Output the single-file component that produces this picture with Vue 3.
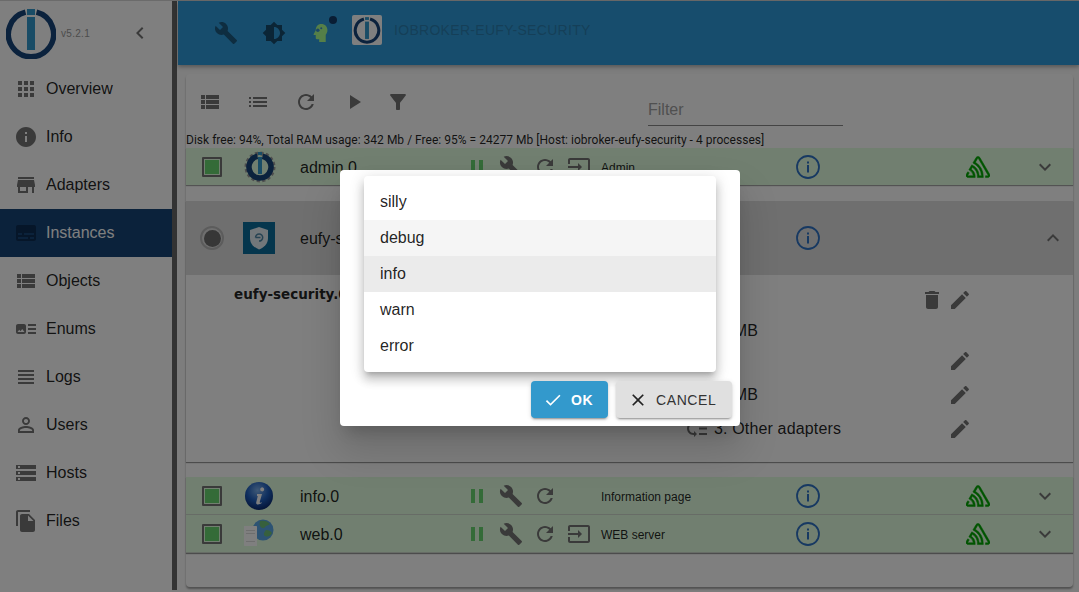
<script setup>
import { ref } from 'vue';

const icons = {
    apps: 'M4 8h4V4H4v4zm6 12h4v-4h-4v4zm-6 0h4v-4H4v4zm0-6h4v-4H4v4zm6 0h4v-4h-4v4zm6-10v4h4V4h-4zm-6 4h4V4h-4v4zm6 6h4v-4h-4v4zm0 6h4v-4h-4v4z',
    info: 'M12 2C6.48 2 2 6.48 2 12s4.48 10 10 10 10-4.48 10-10S17.52 2 12 2zm1 15h-2v-6h2v6zm0-8h-2V7h2v2z',
    store: 'M20 4H4v2h16V4zm1 10v-2l-1-5H4l-1 5v2h1v6h10v-6h4v6h2v-6h1zm-9 4H6v-4h6v4z',
    subtitles: 'M20 4H4c-1.1 0-2 .9-2 2v12c0 1.1.9 2 2 2h16c1.1 0 2-.9 2-2V6c0-1.1-.9-2-2-2zM4 12h4v2H4v-2zm10 6H4v-2h10v2zm6 0h-4v-2h4v2zm0-4H10v-2h10v2z',
    viewList: 'M3 14h4v-4H3v4zm0 5h4v-4H3v4zM3 9h4V5H3v4zm5 5h13v-4H8v4zm0 5h13v-4H8v4zM8 5v4h13V5H8z',
    artTrack: 'M22 13h-8v-2h8v2zm0-6h-8v2h8V7zm-8 10h8v-2h-8v2zm-2-8v6c0 1.1-.9 2-2 2H4c-1.1 0-2-.9-2-2V9c0-1.1.9-2 2-2h6c1.1 0 2 .9 2 2zm-1.5 6l-2.25-3-1.75 2.26-1.25-1.51L3.5 15h7z',
    headline: 'M4 15h16v-2H4v2zm0 4h16v-2H4v2zm0-8h16V9H4v2zm0-6v2h16V5H4z',
    person: 'M12 5.9c1.16 0 2.1.94 2.1 2.1s-.94 2.1-2.1 2.1S9.9 9.16 9.9 8s.94-2.1 2.1-2.1m0 9c2.97 0 6.1 1.46 6.1 2.1v1.1H5.9V17c0-.64 3.13-2.1 6.1-2.1M12 4C9.79 4 8 5.79 8 8s1.79 4 4 4 4-1.79 4-4-1.79-4-4-4zm0 9c-2.67 0-8 1.34-8 4v3h16v-3c0-2.66-5.33-4-8-4z',
    storage: 'M2 20h20v-4H2v4zm2-3h2v2H4v-2zM2 4v4h20V4H2zm4 3H4V5h2v2zm-4 7h20v-4H2v4zm2-3h2v2H4v-2z',
    files: 'M16 1H4c-1.1 0-2 .9-2 2v14h2V3h12V1zm-1 4l6 6v10c0 1.1-.9 2-2 2H7.99C6.89 23 6 22.1 6 21l.01-14c0-1.1.89-2 1.99-2h7zm-1 7h5.5L14 6.5V12z',
    build: 'M22.7 19l-9.1-9.1c.9-2.3.4-5-1.5-6.9-2-2-5-2.4-7.4-1.3L9 6 6 9 1.6 4.7C.4 7.1.9 10.1 2.9 12.1c1.9 1.9 4.6 2.4 6.9 1.5l9.1 9.1c.4.4 1 .4 1.4 0l2.3-2.3c.5-.4.5-1.1.1-1.4z',
    brightness: 'M20 15.31L23.31 12 20 8.69V4h-4.69L12 .69 8.69 4H4v4.69L.69 12 4 15.31V20h4.69L12 23.31 15.31 20H20v-4.69zM12 18V6c3.31 0 6 2.69 6 6s-2.69 6-6 6z',
    refresh: 'M17.65 6.35C16.2 4.9 14.21 4 12 4c-4.42 0-7.99 3.58-7.99 8s3.57 8 7.99 8c3.73 0 6.84-2.55 7.73-6h-2.08c-.82 2.33-3.04 4-5.65 4-3.31 0-6-2.69-6-6s2.69-6 6-6c1.66 0 3.14.69 4.22 1.78L13 11h7V4l-2.35 2.35z',
    play: 'M8 5v14l11-7z',
    filter: 'M4.25 5.61C6.27 8.2 10 13 10 13v6c0 .55.45 1 1 1h2c.55 0 1-.45 1-1v-6s3.72-4.8 5.74-7.39c.51-.66.04-1.61-.79-1.61H5.04c-.83 0-1.3.95-.79 1.61z',
    list: 'M3 13h2v-2H3v2zm0 4h2v-2H3v2zm0-8h2V7H3v2zm4 4h14v-2H7v2zm0 4h14v-2H7v2zM7 7v2h14V7H7z',
    input: 'M21 3.01H3c-1.1 0-2 .9-2 2V9h2V4.99h18v14.03H3V15H1v4.01c0 1.1.9 1.98 2 1.98h18c1.1 0 2-.88 2-1.98v-14c0-1.11-.9-2-2-2zM11 16l4-4-4-4v3H1v2h10v3z',
    pause: 'M6 19h4V5H6v14zm8-14v14h4V5h-4z',
    trash: 'M6 19c0 1.1.9 2 2 2h8c1.1 0 2-.9 2-2V7H6v12zM19 4h-3.5l-1-1h-5l-1 1H5v2h14V4z',
    edit: 'M3 17.25V21h3.75L17.81 9.94l-3.75-3.75L3 17.25zM20.71 7.04c.39-.39.39-1.02 0-1.41l-2.34-2.34c-.39-.39-1.02-.39-1.41 0l-1.83 1.83 3.75 3.75 1.83-1.83z',
    check: 'M9 16.17L4.83 12l-1.42 1.41L9 19 21 7l-1.41-1.41z',
    close: 'M19 6.41L17.59 5 12 10.59 6.41 5 5 6.41 10.59 12 5 17.59 6.41 19 12 13.41 17.59 19 19 17.59 13.41 12z',
    more: 'M16.59 8.59L12 13.17 7.41 8.59 6 10l6 6 6-6z',
    less: 'M12 8l-6 6 1.41 1.41L12 10.83l4.59 4.58L18 14z',
    back: 'M15.41 7.41L14 6l-6 6 6 6 1.41-1.41L10.83 12z',
    priority: 'M14 5h8v2h-8zm0 5.5h8v2h-8zm0 5.5h8v2h-8zM2 11.5C2 15.08 4.92 18 8.5 18H9v2l3-3-3-3v2h-.5C6.02 16 4 13.98 4 11.5S6.02 7 8.5 7H12V5H8.5C4.92 5 2 7.92 2 11.5z',
    sentry: 'M13.91 2.505c-.873-1.448-2.972-1.448-3.844 0L6.904 7.92a15.478 15.478 0 0 1 8.53 12.811h-2.221A13.301 13.301 0 0 0 5.784 9.814l-2.926 5.06a7.65 7.65 0 0 1 4.435 5.848H2.194a.365.365 0 0 1-.298-.534l1.413-2.402a5.16 5.16 0 0 0-1.614-.913L.296 19.275a2.182 2.182 0 0 0 .812 2.999 2.24 2.24 0 0 0 1.086.288h6.983a9.322 9.322 0 0 0-3.845-8.318l1.11-1.922a11.47 11.47 0 0 1 4.95 10.24h5.915a17.242 17.242 0 0 0-7.885-15.28l2.244-3.845a.37.37 0 0 1 .504-.13c.255.14 9.75 16.708 9.928 16.9a.365.365 0 0 1-.327.543h-2.287c.029.612.029 1.223 0 1.831h2.297a2.206 2.206 0 0 0 1.922-3.31z',
};

const nav = [
    { name: 'Overview', icon: 'apps' },
    { name: 'Info', icon: 'info' },
    { name: 'Adapters', icon: 'store' },
    { name: 'Instances', icon: 'subtitles', active: true },
    { name: 'Objects', icon: 'viewList' },
    { name: 'Enums', icon: 'artTrack' },
    { name: 'Logs', icon: 'headline' },
    { name: 'Users', icon: 'person' },
    { name: 'Hosts', icon: 'storage' },
    { name: 'Files', icon: 'files' },
];

const details = [
    { text: 'info', trash: true, edit: true },
    { text: '23 MB' },
    { text: 'on', edit: true },
    { text: '23 MB', edit: true },
    { text: '3. Other adapters', icon: 'priority', edit: true },
];

const levels = ['silly', 'debug', 'info', 'warn', 'error'];
const level = ref('info');
const hovered = ref('debug');
</script>

<template>
    <div class="page">
        <div class="topline"></div>
        <div class="shell">
            <aside class="drawer">
                <div class="brand">
                    <svg class="logo" viewBox="0 0 50 50">
                        <path class="logo-ring" d="M19.5 3.2A22.6 22.6 0 1 0 30.5 3.2" />
                        <rect class="logo-bar" x="21" y="0" width="8" height="6" />
                        <rect class="logo-bar" x="21" y="8" width="8" height="33" />
                    </svg>
                    <span class="version">v5.2.1</span>
                    <svg class="icon back" viewBox="0 0 24 24"><path :d="icons.back" /></svg>
                </div>
                <nav>
                    <a v-for="item in nav" :key="item.name" class="nav-item" :class="{ active: item.active }">
                        <svg class="icon" viewBox="0 0 24 24"><path :d="icons[item.icon]" /></svg>
                        <span>{{ item.name }}</span>
                    </a>
                </nav>
            </aside>
            <div class="drawer-bar"></div>

            <div class="main">
                <header class="appbar">
                    <svg class="icon bar-icon" viewBox="0 0 24 24"><path :d="icons.build" /></svg>
                    <svg class="icon bar-icon" viewBox="0 0 24 24"><path fill-rule="evenodd" :d="icons.brightness" /></svg>
                    <span class="expert">
                        <svg class="head" viewBox="0 0 24 32">
                            <path class="head-fill" d="M12 3c5.5 0 9 4 9 9 0 3-1.5 5-2.5 6.5V29H9v-4H5.6c-1.2 0-1.6-.8-1.6-2v-4H1.5c-.7 0-.9-.6-.6-1.200L4 12c0-5 3-9 8-9z" />
                            <circle class="head-mark" cx="7" cy="12" r="2.600" />
                            <circle class="head-mark" cx="12" cy="9" r="1.500" />
                        </svg>
                        <span class="dot"></span>
                    </span>
                    <span class="adapter-logo">
                        <svg viewBox="0 0 50 50">
                            <path class="logo-ring" d="M19.5 5.500A21 21 0 1 0 30.500 5.500" stroke-width="5" />
                            <rect class="logo-bar" x="21.500" y="2" width="7" height="5" />
                            <rect class="logo-bar" x="21.500" y="10" width="7" height="31" />
                        </svg>
                    </span>
                    <span class="bar-title">IOBROKER-EUFY-SECURITY</span>
                </header>

                <section class="paper">
                    <div class="toolbar">
                        <div class="tools">
                            <svg class="icon" viewBox="0 0 24 24"><path :d="icons.viewList" /></svg>
                            <svg class="icon" viewBox="0 0 24 24"><path :d="icons.list" /></svg>
                            <svg class="icon" viewBox="0 0 24 24"><path :d="icons.refresh" /></svg>
                            <svg class="icon" viewBox="0 0 24 24"><path :d="icons.play" /></svg>
                            <svg class="icon funnel" viewBox="0 0 24 24"><path :d="icons.filter" /></svg>
                        </div>
                        <div class="filter">Filter</div>
                    </div>
                    <div class="status">Disk free: 94%, Total RAM usage: 342 Mb / Free: 95% = 24277 Mb [Host: iobroker-eufy-security - 4 processes]</div>

                    <div class="row green single">
                        <span class="check"><i></i></span>
                        <svg class="adapter gear" viewBox="0 0 32 32">
                            <circle class="gear-ring" cx="16" cy="16" r="13.500" />
                            <path class="logo-ring" d="M13.500 5.300A11 11 0 1 0 18.500 5.300" stroke-width="3" />
                            <rect class="logo-bar" x="14" y="1" width="4" height="3" />
                            <rect class="logo-bar" x="14" y="6" width="4" height="17" />
                        </svg>
                        <span class="name">admin.0</span>
                        <span class="actions">
                            <svg class="icon pause" viewBox="0 0 24 24"><path :d="icons.pause" /></svg>
                            <svg class="icon" viewBox="0 0 24 24"><path :d="icons.build" /></svg>
                            <svg class="icon" viewBox="0 0 24 24"><path :d="icons.refresh" /></svg>
                            <svg class="icon" viewBox="0 0 24 24"><path :d="icons.input" /></svg>
                        </span>
                        <span class="desc">Admin</span>
                        <svg class="info-ring" viewBox="0 0 24 24"><circle cx="12" cy="12" r="11" /><path d="M11 6.500h2v2h-2zm0 3.500h2v7.500h-2z" /></svg>
                        <svg class="sentry" viewBox="0 0 24 24"><path :d="icons.sentry" /></svg>
                        <svg class="icon chevron" viewBox="0 0 24 24"><path :d="icons.more" /></svg>
                    </div>

                    <div class="accordion">
                        <div class="row open">
                            <span class="radio"><i></i></span>
                            <span class="eufy">
                                <svg viewBox="0 0 32 32">
                                    <path class="shield" d="M16 5l9 3v8c0 6-4 9.500-9 11.500C11 25.500 7 22 7 16V8z" />
                                    <path class="shield-mark" d="M12.500 15.500a3.600 3.600 0 1 1 3.500 3.600M12.500 15.500h5" />
                                </svg>
                            </span>
                            <span class="name">eufy-security.0</span>
                            <span class="actions"></span>
                            <span class="desc"></span>
                            <svg class="info-ring" viewBox="0 0 24 24"><circle cx="12" cy="12" r="11" /><path d="M11 6.500h2v2h-2zm0 3.500h2v7.500h-2z" /></svg>
                            <span></span>
                            <svg class="icon chevron up" viewBox="0 0 24 24"><path :d="icons.less" /></svg>
                        </div>
                        <div class="detail">
                            <div class="detail-title">eufy-security.0</div>
                            <div class="detail-list">
                                <div v-for="(d, i) in details" :key="i" class="detail-row">
                                    <svg v-if="d.icon" class="icon low" viewBox="0 0 24 24"><path :d="icons[d.icon]" /></svg>
                                    <span v-else class="low"></span>
                                    <span class="detail-text">{{ d.text }}</span>
                                    <span class="detail-tools">
                                        <svg v-if="d.trash" class="icon" viewBox="0 0 24 24"><path :d="icons.trash" /></svg>
                                        <svg v-if="d.edit" class="icon" viewBox="0 0 24 24"><path :d="icons.edit" /></svg>
                                    </span>
                                </div>
                            </div>
                        </div>
                    </div>

                    <div class="group">
                        <div class="row green">
                            <span class="check"><i></i></span>
                            <svg class="adapter" viewBox="0 0 32 32">
                                <defs>
                                    <radialGradient id="ball" cx="45%" cy="30%" r="70%">
                                        <stop offset="0" stop-color="#7fb3ee" />
                                        <stop offset="0.55" stop-color="#1f5fbf" />
                                        <stop offset="1" stop-color="#0a2a70" />
                                    </radialGradient>
                                </defs>
                                <circle cx="15" cy="16" r="14" fill="url(#ball)" />
                                <path fill="#fff" d="M17.500 7.500a2 2 0 1 1 .1 3.800 2 2 0 0 1-.1-3.800zM13 14h5l-2.300 8c-.2.800.4 1 1.800.2l.3.800c-2 1.600-6 2.400-5.600-.6l1.600-6.400H13z" />
                            </svg>
                            <span class="name">info.0</span>
                            <span class="actions">
                                <svg class="icon pause" viewBox="0 0 24 24"><path :d="icons.pause" /></svg>
                                <svg class="icon" viewBox="0 0 24 24"><path :d="icons.build" /></svg>
                                <svg class="icon" viewBox="0 0 24 24"><path :d="icons.refresh" /></svg>
                            </span>
                            <span class="desc">Information page</span>
                            <svg class="info-ring" viewBox="0 0 24 24"><circle cx="12" cy="12" r="11" /><path d="M11 6.500h2v2h-2zm0 3.500h2v7.500h-2z" /></svg>
                            <svg class="sentry" viewBox="0 0 24 24"><path :d="icons.sentry" /></svg>
                            <svg class="icon chevron" viewBox="0 0 24 24"><path :d="icons.more" /></svg>
                        </div>
                        <div class="row green">
                            <span class="check"><i></i></span>
                            <svg class="adapter" viewBox="0 0 32 32">
                                <circle cx="19" cy="12" r="10.500" fill="#5aa6e6" />
                                <path fill="#6fc07a" d="M16 3c4-1 8 0 10 3-2 2-4 1-5 3s-4 1-5-1 0-3 0-5zM22 12c3 0 5 1 6 3-2 4-5 4-7 3s-1-4 1-6z" />
                                <path fill="#fff" d="M0 8h12c.6 0 1 .4 1 1v19H1c-.6 0-1-.4-1-1z" />
                                <path fill="#dcdcdc" d="M2 12h9v1H2zm0 3h9v1H2zm0 8h9v1H2z" />
                            </svg>
                            <span class="name">web.0</span>
                            <span class="actions">
                                <svg class="icon pause" viewBox="0 0 24 24"><path :d="icons.pause" /></svg>
                                <svg class="icon" viewBox="0 0 24 24"><path :d="icons.build" /></svg>
                                <svg class="icon" viewBox="0 0 24 24"><path :d="icons.refresh" /></svg>
                                <svg class="icon" viewBox="0 0 24 24"><path :d="icons.input" /></svg>
                            </span>
                            <span class="desc">WEB server</span>
                            <svg class="info-ring" viewBox="0 0 24 24"><circle cx="12" cy="12" r="11" /><path d="M11 6.500h2v2h-2zm0 3.500h2v7.500h-2z" /></svg>
                            <svg class="sentry" viewBox="0 0 24 24"><path :d="icons.sentry" /></svg>
                            <svg class="icon chevron" viewBox="0 0 24 24"><path :d="icons.more" /></svg>
                        </div>
                    </div>
                </section>
            </div>
        </div>

        <div class="backdrop">
            <div class="dialog">
                <ul class="menu">
                    <li
                        v-for="l in levels"
                        :key="l"
                        :class="{ selected: l === level, hover: l === hovered }"
                        @click="level = l"
                        @mouseenter="hovered = l"
                    >{{ l }}</li>
                </ul>
                <div class="dialog-actions">
                    <button class="btn ok">
                        <svg viewBox="0 0 24 24"><path :d="icons.check" /></svg>
                        OK
                    </button>
                    <button class="btn cancel">
                        <svg viewBox="0 0 24 24"><path :d="icons.close" /></svg>
                        Cancel
                    </button>
                </div>
            </div>
        </div>
    </div>
</template>

<style>
html, body { margin: 0; overflow: hidden; }
</style>

<style scoped>
* { box-sizing: border-box; }

.page {
    position: relative;
    width: 1079px;
    height: 592px;
    overflow: hidden;
    background: #fafafa;
    font-family: "Liberation Sans", Arial, sans-serif;
    color: rgba(0, 0, 0, 0.87);
    display: flex;
    flex-direction: column;
}

.topline { height: 1px; background: #d6d6d6; flex-shrink: 0; }
.shell { flex: 1; display: flex; min-height: 0; }

.icon { width: 24px; height: 24px; fill: #757575; flex-shrink: 0; display: block; }

.drawer { width: 172px; flex-shrink: 0; background: #fff; }
.drawer-bar { width: 5px; background: #666; flex-shrink: 0; margin: 0 1px 2px 0; }

.brand { height: 64px; display: flex; align-items: center; padding-left: 6px; }
.logo { width: 50px; height: 50px; margin-top: 2px; }
.logo-ring { fill: none; stroke: #16447a; stroke-width: 5.500; }
.logo-bar { fill: #3399cc; }
.version { font-size: 10px; color: #999; margin-left: 5px; width: 67px; letter-spacing: 0.3px; }
.back { margin-top: -1px; }

.nav-item {
    height: 48px;
    display: flex;
    align-items: center;
    gap: 8px;
    padding-left: 14px;
    font-size: 16px;
    padding-bottom: 1px;
}
.nav-item.active { background: #164477; color: #fff; }
.nav-item.active .icon { fill: #0d2c52; }

.main { flex: 1; min-width: 0; display: flex; flex-direction: column; }

.appbar {
    height: 64px;
    flex-shrink: 0;
    background: #2f9bdb;
    box-shadow: 0 2px 4px rgba(0, 0, 0, 0.3);
    display: flex;
    align-items: center;
    padding: 0 0 0 36px;
    position: relative;
}
.bar-icon { fill: #1c5a80; margin-right: 24px; width: 24px; height: 24px; }
.bar-icon:nth-child(2) { fill: #174a6c; margin-right: 22px; }
.expert { position: relative; width: 30px; height: 36px; margin-right: 14px; }
.head { position: absolute; left: 5px; top: 7px; width: 16.500px; height: 22px; }
.head-fill { fill: #aaff90; }
.head-mark { fill: #3a8fc8; }
.dot { position: absolute; left: 21px; top: 1px; width: 8px; height: 8px; border-radius: 50%; background: #123a68; }
.adapter-logo { width: 30px; height: 30px; background: #fff; border-radius: 2px; margin-right: 12px; margin-top: -6px; padding: 1px; flex-shrink: 0; }
.adapter-logo svg { display: block; width: 28px; height: 28px; }
.bar-title { font-size: 14px; letter-spacing: 0.3px; color: #2a7fb0; margin-top: -6px; }

.paper {
    margin: 9px 6px 5px 8px;
    flex: 1;
    background: #fff;
    border-radius: 4px;
    box-shadow: 0 2px 2px rgba(0, 0, 0, 0.35);
    display: flex;
    flex-direction: column;
}

.toolbar { height: 55px; display: flex; flex-shrink: 0; position: relative; }
.tools { display: flex; gap: 24px; align-items: center; padding: 0 0 0 12px; height: 55px; }
.funnel { margin-left: -4px; }
.filter {
    margin: 24px 0 0 238px;
    width: 195px;
    height: 28px;
    border-bottom: 1px solid #888;
    color: #a0a0a0;
    font-size: 16px;
    line-height: 23px;
}

.status { font-family: Roboto, sans-serif; font-size: 12px; letter-spacing: 0.02px; height: 19px; line-height: 23px; white-space: nowrap; flex-shrink: 0; }

.row {
    display: grid;
    grid-template-columns: 58px 56px 165px 136px 195px 170px 64px 1fr;
    align-items: center;
    height: 38px;
}
.green { background: #e3ffe0; border-bottom: 1px solid #cfd9cd; }
.single { height: 37px; box-shadow: 0 1px 1px rgba(0, 0, 0, 0.35); border-bottom: 0; margin-bottom: 16px; }

.check {
    margin-left: 16px;
    width: 20px;
    height: 20px;
    border: 2px solid #757575;
    display: flex;
    padding: 1px;
    border-radius: 1px;
}
.check i { flex: 1; background: #68d670; }

.adapter { width: 32px; height: 32px; display: block; }
.gear-ring { fill: none; stroke: #9c9c9c; stroke-width: 4; stroke-dasharray: 3 2.300; }

.name { font-size: 16px; padding-top: 2px; white-space: nowrap; }

.actions { display: flex; align-items: center; gap: 10px; }
.pause { fill: #68d670; }

.desc { font-size: 12px; padding-top: 3px; }
.info-ring { width: 24px; height: 24px; display: block; }
.info-ring circle { fill: none; stroke: #2f72c4; stroke-width: 1.800; }
.info-ring path { fill: #2f72c4; }
.sentry { width: 24px; height: 24px; display: block; fill: #00a800; stroke: #00a800; stroke-width: 0.500; }
.chevron { margin-left: 3px; }
.chevron.up { margin-left: 11px; }

.accordion { box-shadow: 0 1px 1px rgba(0, 0, 0, 0.4); margin-bottom: 15px; }
.open { height: 74px; background: #dfdfdf; }
.radio {
    margin-left: 14px;
    width: 24px;
    height: 24px;
    border-radius: 50%;
    border: 2px solid #b8b8b8;
    display: flex;
    padding: 1.500px;
}
.radio i { flex: 1; background: #6e6e6e; border-radius: 50%; }
.eufy { display: block; width: 32px; height: 32px; background: #0a6c9b; margin-top: -1px; margin-left: -1px; }
.eufy svg { display: block; }
.shield { fill: #e4eef4; }
.shield-mark { fill: none; stroke: #4f87a6; stroke-width: 1.500; }

.detail { height: 187px; display: flex; position: relative; padding: 8px 0 0 48px; }
.detail-title { font-family: "DejaVu Sans", Verdana, sans-serif; font-weight: 700; font-size: 13.500px; width: 446px; padding-top: 3px; }
.detail-list { display: flex; flex-direction: column; }
.detail-row { display: flex; align-items: center; height: 34px; font-size: 16px; }
.detail-row:nth-child(2) { height: 28px; }
.detail-row:nth-child(3) { height: 32px; }
.detail-row:nth-child(4) { height: 36px; }
.detail-row:nth-child(5) { height: 32px; }
.low { width: 34px; flex-shrink: 0; }
.detail-text { width: 194px; letter-spacing: 0.15px; }
.detail-row:nth-child(2) .detail-text, .detail-row:nth-child(4) .detail-text { margin-left: -3px; width: 197px; }
.detail-tools { display: flex; width: 64px; gap: 4px; justify-content: flex-end; }

.group { box-shadow: 0 1px 1px rgba(0, 0, 0, 0.4); }

.backdrop {
    position: absolute;
    inset: 0;
    background: rgba(0, 0, 0, 0.5);
    display: flex;
    align-items: center;
    justify-content: center;
    padding-top: 4px;
    padding-left: 1px;
}

.dialog {
    width: 400px;
    height: 256px;
    background: #fff;
    border-radius: 4px;
    padding: 6px 24px 0;
    box-shadow: 0 11px 15px -7px rgba(0, 0, 0, 0.2), 0 24px 38px 3px rgba(0, 0, 0, 0.14);
    display: flex;
    flex-direction: column;
}

.menu {
    list-style: none;
    margin: 0;
    padding: 8px 0;
    height: 196px;
    background: #fff;
    border-radius: 4px;
    box-shadow: 0 5px 5px -3px rgba(0, 0, 0, 0.2), 0 8px 10px 1px rgba(0, 0, 0, 0.14), 0 3px 14px 2px rgba(0, 0, 0, 0.12);
    flex-shrink: 0;
}
.menu li { height: 36px; line-height: 35px; padding-left: 16px; font-size: 16px; }
.menu li.hover { background: #f5f5f5; }
.menu li.selected { background: #ebebeb; }

.dialog-actions {
    display: flex;
    justify-content: flex-end;
    gap: 8px;
    margin: 9px -16px 0 0;
}

.btn {
    height: 37px;
    border: 0;
    border-radius: 4px;
    font-family: inherit;
    font-size: 14px;
    text-transform: uppercase;
    letter-spacing: 0.6px;
    display: flex;
    align-items: center;
    gap: 8px;
    padding: 0 0 0 12px;
    box-shadow: 0 3px 1px -2px rgba(0, 0, 0, 0.2), 0 2px 2px 0 rgba(0, 0, 0, 0.14), 0 1px 5px 0 rgba(0, 0, 0, 0.12);
}
.btn svg { width: 20px; height: 20px; }
.ok { background: #3399cc; color: #fff; font-weight: 700; width: 77px; }
.ok svg { fill: #fff; }
.cancel { background: #e0e0e0; color: #333; width: 116px; }
.cancel svg { fill: #222; }
</style>
